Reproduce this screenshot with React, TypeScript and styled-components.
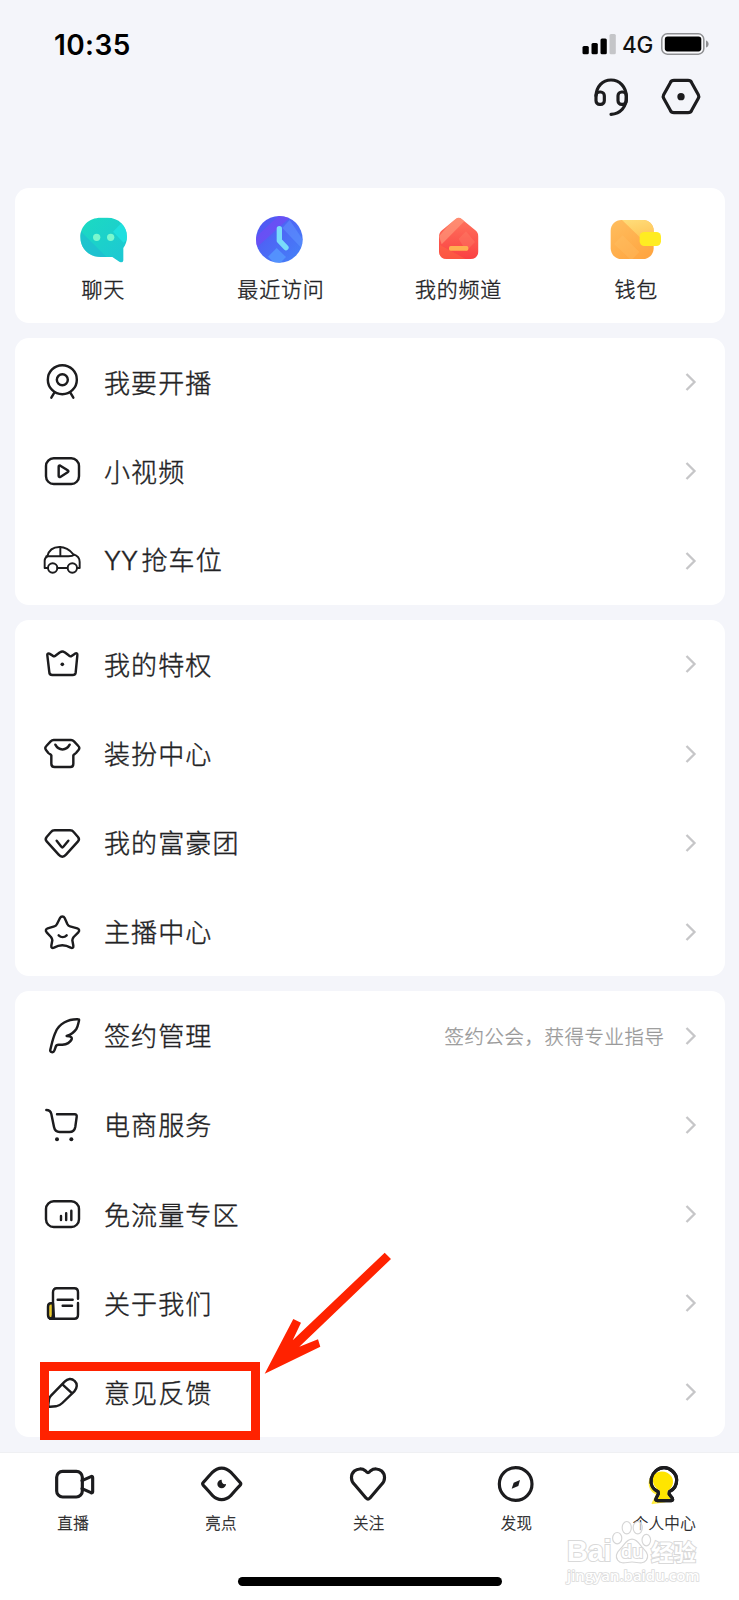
import React from "react";
import styled, { createGlobalStyle } from "styled-components";

const INK = "#1c1c1e";
const CJK = '"Noto Sans CJK SC", "Liberation Sans", sans-serif';

const GlobalStyle = createGlobalStyle`
  * { box-sizing: border-box; }
  body { margin: 0; background: #f4f5fa; font-family: ${CJK}; font-weight: 300; color: #222224; }
`;

const Screen = styled.div`
  position: relative;
  width: 739px;
  height: 1600px;
  overflow: hidden;
  display: flex;
  flex-direction: column;
  background: #f4f5fa;
`;

const StatusBar = styled.div`
  height: 66px;
  padding: 22px 30px 0 54px;
  display: flex;
  justify-content: space-between;
  align-items: center;
`;

const Clock = styled.span`
  font: 600 28px/1 Inter, sans-serif;
  letter-spacing: 0.4px;
  padding-top: 2px;
  color: #000;
`;

const StatusRight = styled.div`
  display: flex;
  align-items: center;
`;

const Network = styled.span`
  font: 500 22.5px/1 Inter, sans-serif;
  color: #111;
  width: 31px;
  margin: 2px 8px 0 6px;
  letter-spacing: -0.3px;
`;

const Toolbar = styled.div`
  height: 121.7px;
  padding: 11px 38px 0 0;
  display: flex;
  justify-content: flex-end;
  align-items: flex-start;
  gap: 29.8px;
`;

const Glyph = styled.svg<{ $size: number }>`
  display: block;
  flex: none;
  width: ${(p) => p.$size}px;
  height: ${(p) => p.$size}px;
  overflow: visible;
  fill: none;
  stroke: ${INK};
  stroke-linecap: round;
  stroke-linejoin: round;
`;

const Cards = styled.main`
  display: flex;
  flex-direction: column;
  gap: 14.6px;
  padding: 0 14px 0 14.5px;
  flex: none;
  height: 1264.7px;
`;

const Card = styled.section`
  flex: none;
  background: #fff;
  border-radius: 14px;
`;

const QuickCard = styled(Card)`
  height: 135.3px;
  display: grid;
  grid-template-columns: repeat(4, 1fr);
`;

const QuickItem = styled.div`
  display: flex;
  flex-direction: column;
  align-items: center;
  padding-top: 24.3px;
`;

const QuickLabel = styled.span`
  margin-top: 8.2px;
  font-size: 21px;
  line-height: 30px;
  letter-spacing: 0.8px;
  -webkit-text-stroke: 0.4px currentColor;
`;

const Row = styled.div`
  height: 89.2px;
  display: flex;
  align-items: center;
  padding: 0 27px 0 27.5px;
`;

const RowLabel = styled.span`
  margin: -1px 0 0 22px;
  flex: 1;
  font-size: 26px;
  line-height: 40px;
  letter-spacing: 1.1px;
  -webkit-text-stroke: 0.4px currentColor;
`;

const Latin = styled.span`
  font-family: Inter, sans-serif;
  font-size: 25.5px;
  letter-spacing: 0;
  display: inline-block;
  width: 37.5px;
`;

const Hint = styled.span`
  font-size: 19.4px;
  letter-spacing: 0.6px;
  color: #999;
  margin-right: 20.5px;
  -webkit-text-stroke: 0.3px currentColor;
`;

const ChevronSvg = styled.svg`
  width: 13px;
  height: 20px;
  fill: none;
  stroke: #c6c6c8;
  stroke-width: 2.3;
  flex: none;
`;

const TabBar = styled.nav`
  flex: 1;
  background: #fff;
  display: grid;
  grid-template-columns: repeat(5, 1fr);
  border-top: 1px solid #eff0f3;
`;

const Tab = styled.div`
  display: flex;
  flex-direction: column;
  align-items: center;
  padding-top: 9px;
`;

const TabLabel = styled.span`
  margin: 3.5px 1.5px 0 0;
  font-size: 15.5px;
  line-height: 24px;
  letter-spacing: 0.3px;
  -webkit-text-stroke: 0.3px currentColor;
`;

const HomeIndicator = styled.div`
  position: absolute;
  left: 237.5px;
  top: 1576.8px;
  width: 264px;
  height: 9px;
  border-radius: 5px;
  background: #000;
`;

const HighlightBox = styled.div`
  position: absolute;
  left: 40.3px;
  top: 1362.3px;
  width: 219.7px;
  height: 78px;
  border: 9px solid #ff2200;
`;

const Arrow = styled.svg`
  position: absolute;
  left: 260px;
  top: 1248px;
  width: 135px;
  height: 130px;
`;

const Watermark = styled.div`
  position: absolute;
  left: 567px;
  top: 1519px;
  width: 134px;
  height: 70px;
`;

const MarkLine = styled.div`
  position: relative;
  display: flex;
  align-items: center;
  height: 24px;
  margin-top: 20px;
  color: #fff;
  -webkit-text-stroke: 2px #d9d9d9;
  paint-order: stroke fill;
`;

const MarkLatin = styled.span`
  font: 700 29px/24px "Liberation Sans", sans-serif;
  width: 46px;
  letter-spacing: -0.3px;
`;

const MarkDu = styled.span`
  width: 38px;
  text-align: center;
  font: 600 18px/24px "Open Sans", sans-serif;
`;

const MarkCjk = styled.span`
  font: 700 22.5px/24px ${CJK};
`;

const MarkUrl = styled.div`
  margin-top: 3px;
  font: 600 15px/18px "Open Sans", sans-serif;
  color: #fff;
  white-space: nowrap;
  -webkit-text-stroke: 1.6px #dbdbdb;
  paint-order: stroke fill;
`;

const Paw = styled.svg`
  position: absolute;
  left: 44px;
  top: 0;
  width: 42px;
  height: 46px;
  fill: #ffffff99;
  stroke: #d6d6d6;
  stroke-width: 1.2;
`;

const rowIcons: Record<string, React.ReactNode> = {
  webcam: (
    <>
      <circle cx="61" cy="53" r="43.5" />
      <circle cx="61" cy="53" r="16.5" />
      <path d="M37 92 28 107M85 92l9 15" />
    </>
  ),
  video: (
    <>
      <rect x="12" y="22" width="99" height="77" rx="23" />
      <path d="M50 47v28c0 3 3 4 5 3l22-14c3-2 3-4 0-6L55 44c-2-1-5 0-5 3z" />
    </>
  ),
  car: (
    <g strokeWidth="5.8">
      <path d="M17 81H8V59c0-7 3-10 8-13C21 25 34 18 52 18c20 0 32 9 42 22 12 3 19 8 19 23v18h-7M46 81h30" />
      <path d="M13 46h66c8 0 14-1 18-5M55 18v28" />
      <circle cx="32" cy="81" r="14" />
      <circle cx="91" cy="81" r="14" />
    </g>
  ),
  crown: (
    <>
      <path d="M16 34c-1-5 2-7 6-5l10 6c4 3 7 3 10-1l12-9c5-4 9-4 14 0l12 9c3 4 6 4 10 1l9-6c5-3 8-1 7 5l-5 52c-1 5-4 7-9 7H31c-5 0-9-3-9-8z" />
      <circle cx="61" cy="61" r="5.5" fill={INK} stroke="none" />
    </>
  ),
  shirt: (
    <>
      <path d="M35 18h52c4 0 6 1 9 4l13 14c4 4 4 7 1 11l-8 10c-3 3-7 4-8 7v25c0 7-3 10-9 10H38c-6 0-10-3-10-10V64c-2-3-6-4-9-7L12 48c-3-4-3-8 1-12l13-14c3-3 5-4 9-4z" />
      <path d="M40 32c10 19 33 19 43 0" />
    </>
  ),
  diamond: (
    <>
      <path d="M38 22h46c5 0 8 1 11 5l13 15c4 5 4 9 0 13L72 95c-7 8-15 8-22 0L14 55c-4-4-4-8 0-13l13-15c3-4 6-5 11-5z" />
      <path d="m44 53 14 18c2 3 4 3 6 0l15-18" />
    </>
  ),
  star: (
    <>
      <path d="M54 18c3-6 11-6 14 0l8 18c2 4 4 6 8 7l22 6c6 2 7 7 3 12L95 75c-3 4-4 6-4 10l3 16c1 6-3 8-8 6-16-9-34-9-50 0-5 2-9 0-8-6l3-16c0-4-1-6-4-10L14 61c-4-5-3-10 3-12l20-6c4-1 6-3 8-7z" />
      <path d="M50 70c7 7 17 7 24 0" />
    </>
  ),
  feather: (
    <path d="M108 10C77 9 51 24 41 48c-9 19-12 38-16 53-2 8 9 11 12 3l4-11c1-5 3-7 9-7h11c12-1 23-6 28-16 2-5-2-8-7-9l-8-1c14-4 23-12 29-21 5-8 6-18 8-25 1-3 0-4-3-4z" />
  ),
  cart: (
    <>
      <path d="M13 15c9 0 13 3 15 12l8 39c2 10 7 15 17 15h29c11 0 16-5 18-16l4-29c1-6-1-8-6-8H45" />
      <circle cx="45" cy="103" r="6" fill={INK} stroke="none" />
      <circle cx="88" cy="103" r="6" fill={INK} stroke="none" />
    </>
  ),
  data: (
    <>
      <rect x="12" y="22" width="99" height="77" rx="23" />
      <path d="M57 66v12M72.500 58v20M88 50v28" />
    </>
  ),
  news: (
    <>
      <path d="M36 107H28c-7 0-10-4-10-11V71c0-7 4-10 9-10h6z" fill="#e8c92c" />
      <path d="M108 47V28c0-8-4-12-11-12H44c-7 0-11 4-11 12v67c0 6-2 12-9 12h73c7 0 11-4 11-12V60" />
      <path d="M47 50h45M62 68h28" />
    </>
  ),
  pen: (
    <>
      <path d="M27 71 68 29c9-10 21-11 30-2 9 8 8 21-1 31L61 93c-6 6-11 9-19 10l-17 1c-5 1-7-1-6-6l2-16c1-5 3-8 6-11z" />
      <path d="m62 38 26 24" />
    </>
  ),
};

const tabIcons: Record<string, React.ReactNode> = {
  live: (
    <>
      <rect x="14" y="28" width="77" height="77" rx="18" />
      <path d="m90 56 27-12c3-2 5 0 5 3v42c0 3-2 4-5 3L90 80" />
    </>
  ),
  highlight: (
    <>
      <path d="M10 61C22 49 29 39 37 31c17-17 39-17 56 0 8 8 15 18 27 30 3 3 3 6 0 9-12 12-19 22-27 30-17 17-39 17-56 0-8-8-15-18-27-30-3-3-3-6 0-9z" />
      <path d="M65 53c-7 0-13 6-13 13s6 13 13 13 13-6 13-13c-8 2-14-4-13-13z" fill={INK} stroke="none" />
    </>
  ),
  follow: (
    <path d="M55 26c3 4 5 6 8 6s5-2 8-6c9-7 24-7 33 1 12 11 11 29 0 40l-35 41c-4 4-8 4-12 0L22 67c-11-11-12-29 0-40 10-8 24-8 33-1z" />
  ),
  discover: (
    <>
      <circle cx="62" cy="66" r="49" />
      <path d="m75 54-5 18-20 8 6-18z" fill={INK} stroke="none" />
    </>
  ),
  mine: (
    <>
      <circle cx="54" cy="64" r="37" fill="#ffe500" stroke="none" opacity=".8" />
      <path d="m40 95-14 28c-1 3 1 4 4 3l38-5z" fill="#ffe500" stroke="none" opacity=".75" />
      <path d="M46 89C28 82 22 65 25 49c5-19 20-32 38-32s38 16 38 37c0 16-9 29-22 35l-1 7 10 13c2 4 1 7-3 7H43c-4 0-6-2-4-6l7-14z" fill="#fff" />
      <path d="M48 85C30 74 26 54 32 39c17-17 42-12 54 5 9 16 2 35-12 42v11l9 14H44l7-14z" fill="#ffe500" stroke="none" />
      <path d="M46 89C28 82 22 65 25 49c5-19 20-32 38-32s38 16 38 37c0 16-9 29-22 35l-1 7 10 13c2 4 1 7-3 7H43c-4 0-6-2-4-6l7-14z" />
    </>
  ),
};

const quickIcons: Record<string, React.ReactNode> = {
  chat: (
    <>
      <defs>
        <linearGradient id="chatFill" x1="0" y1="0" x2="1" y2="1">
          <stop offset="0" stopColor="#1bdcc0" />
          <stop offset="1" stopColor="#1dc5d6" />
        </linearGradient>
        <clipPath id="chatClip">
          <path d="M10 64C10 30 36 5 71 5h20c34 0 59 24 59 57 0 13-4 24-11 34v36c0 7-6 9-12 5l-21-14H71c-35 0-61-25-61-59z" />
        </clipPath>
      </defs>
      <g clipPath="url(#chatClip)" stroke="none">
        <path d="M0 0h160v150H0z" fill="url(#chatFill)" />
        <path d="M10 45 100 135H10z" fill="#20b4d4" opacity=".5" />
        <path d="m108 47 36-37 26 42-30 28z" fill="#22e8e8" opacity=".65" />
      </g>
      <circle cx="59" cy="64" r="11" fill="#79f8ce" stroke="none" />
      <circle cx="101" cy="64" r="11" fill="#79f8ce" stroke="none" />
    </>
  ),
  recent: (
    <g transform="translate(-3 0)">
      <defs>
        <linearGradient id="clockFill" x1="0" y1="0" x2="1" y2="1">
          <stop offset="0" stopColor="#544ff3" />
          <stop offset="1" stopColor="#4386f8" />
        </linearGradient>
        <clipPath id="clockClip"><circle cx="79" cy="70" r="70" /></clipPath>
      </defs>
      <g clipPath="url(#clockClip)" stroke="none">
        <path d="M0 0h150v150H0z" fill="url(#clockFill)" />
        <path d="M9 96V63L76 0h40z" fill="#704cf4" opacity=".75" />
        <path d="m88 36 22-24 50 75-12 12z" fill="#6297ff" opacity=".5" />
        <path d="m45 122 26-26 28 27-26 27z" fill="#579cff" opacity=".75" />
      </g>
      <path d="M79 38v36l20 21" stroke="#79dcfa" strokeWidth="16" />
    </g>
  ),
  channel: (
    <g transform="translate(4 0)">
      <defs>
        <linearGradient id="homeFill" x1="0" y1="0" x2="0" y2="1">
          <stop offset="0" stopColor="#ff765e" />
          <stop offset="1" stopColor="#fa3c40" />
        </linearGradient>
        <clipPath id="homeClip">
          <path d="m67 9c6-5 12-5 18 0l41 34c6 5 9 11 9 19v44c0 14-9 23-23 23H40c-14 0-23-9-23-23V62c0-8 3-14 9-19z" />
        </clipPath>
      </defs>
      <g clipPath="url(#homeClip)" stroke="none">
        <path d="M0 0h150v140H0z" fill="url(#homeFill)" />
        <path d="m17 61 52-60 28 11L25 85z" fill="#ff9a7d" opacity=".65" />
        <path d="m76 68 22-22 27 32-27 28z" fill="#ff8b72" opacity=".3" />
        <path d="m20 87 77 42H16z" fill="#ff7341" opacity=".4" />
      </g>
      <rect x="47" y="90" width="58" height="14" rx="5" fill="#ffaf51" stroke="none" />
    </g>
  ),
  wallet: (
    <>
      <defs>
        <linearGradient id="purseFill" x1="0" y1="0" x2=".6" y2="1">
          <stop offset="0" stopColor="#ffc061" />
          <stop offset="1" stopColor="#ffa642" />
        </linearGradient>
        <linearGradient id="purseFlap" x1=".2" y1="0" x2=".6" y2="1">
          <stop offset="0" stopColor="#ffdc78" />
          <stop offset="1" stopColor="#ffc457" />
        </linearGradient>
        <clipPath id="purseClip"><rect x="2" y="12" width="129" height="117" rx="32" /></clipPath>
      </defs>
      <g clipPath="url(#purseClip)" stroke="none">
        <path d="M0 0h135v135H0z" fill="url(#purseFill)" />
        <path d="m36 12 60 58 40-10V12z" fill="url(#purseFlap)" />
        <path d="m12 84 26-26 50 50-24 25z" fill="#ffc369" opacity=".3" />
      </g>
      <rect x="89" y="48" width="64" height="42" rx="14" fill="#ffec22" stroke="none" />
    </>
  ),
};

const quickLinks = [
  { icon: "chat", label: "聊天" },
  { icon: "recent", label: "最近访问" },
  { icon: "channel", label: "我的频道" },
  { icon: "wallet", label: "钱包" },
];

type MenuEntry = { icon: string; latin?: string; label: string; hint?: string };

const menuGroups: MenuEntry[][] = [
  [
    { icon: "webcam", label: "我要开播" },
    { icon: "video", label: "小视频" },
    { icon: "car", latin: "YY", label: "抢车位" },
  ],
  [
    { icon: "crown", label: "我的特权" },
    { icon: "shirt", label: "装扮中心" },
    { icon: "diamond", label: "我的富豪团" },
    { icon: "star", label: "主播中心" },
  ],
  [
    { icon: "feather", label: "签约管理", hint: "签约公会，获得专业指导" },
    { icon: "cart", label: "电商服务" },
    { icon: "data", label: "免流量专区" },
    { icon: "news", label: "关于我们" },
    { icon: "pen", label: "意见反馈" },
  ],
];

const tabs = [
  { icon: "live", label: "直播" },
  { icon: "highlight", label: "亮点" },
  { icon: "follow", label: "关注" },
  { icon: "discover", label: "发现" },
  { icon: "mine", label: "个人中心" },
];

const StatusIcons = () => (
  <>
    <svg width="34" height="22" viewBox="0 0 34 22">
      <rect x="0.500" y="13" width="6.300" height="8.300" rx="1.500" />
      <rect x="9.500" y="10" width="6.300" height="11.300" rx="1.500" />
      <rect x="18.500" y="5.500" width="6.300" height="15.800" rx="1.500" />
      <rect x="27.500" y="1" width="6.300" height="20.300" rx="1.500" fill="#c4c5c8" />
    </svg>
    <Network>4G</Network>
    <svg width="48" height="22" viewBox="0 0 48 22">
      <rect x="0.800" y="0.800" width="42" height="20.400" rx="5.500" fill="#fafafc" stroke="#8f9093" strokeWidth="1.500" />
      <rect x="3.800" y="3.600" width="36.500" height="14.800" rx="2.800" />
      <path d="M45 7.500c3.500 1 3.500 6 0 7z" fill="#8f9093" />
    </svg>
  </>
);

export default function App() {
  return (
    <>
      <GlobalStyle />
      <Screen>
        <StatusBar>
          <Clock>10:35</Clock>
          <StatusRight>
            <StatusIcons />
          </StatusRight>
        </StatusBar>
        <Toolbar>
          <Glyph $size={40} viewBox="0 0 120 120" strokeWidth="9.5">
            <path d="M15 56C17 28 34 9 60 9s45 20 46 49c1 33-18 52-46 54" />
            <rect x="15" y="45" width="25" height="37" rx="11" />
            <rect x="81" y="45" width="25" height="37" rx="11" />
          </Glyph>
          <Glyph $size={40} viewBox="0 0 120 120" strokeWidth="9.5">
            <path d="M39 10h42c5 0 9 2 11 7l20 36c2 4 2 7 0 11l-20 36c-2 5-6 7-11 7H39c-5 0-9-2-11-7L8 64c-2-4-2-7 0-11l20-36c2-5 6-7 11-7z" />
            <circle cx="60" cy="59" r="11" fill={INK} stroke="none" />
          </Glyph>
        </Toolbar>
        <Cards>
          <QuickCard>
            {quickLinks.map((q) => (
              <QuickItem key={q.label}>
                <Glyph $size={53} viewBox="0 -12 159 159">
                  {quickIcons[q.icon]}
                </Glyph>
                <QuickLabel>{q.label}</QuickLabel>
              </QuickItem>
            ))}
          </QuickCard>
          {menuGroups.map((group) => (
            <Card key={group[0].label}>
              {group.map((item) => (
                <Row key={item.label}>
                  <Glyph $size={40} viewBox="0 0 120 120" strokeWidth="7.3">
                    {rowIcons[item.icon]}
                  </Glyph>
                  <RowLabel>
                    {item.latin && <Latin>{item.latin}</Latin>}
                    {item.label}
                  </RowLabel>
                  {item.hint && <Hint>{item.hint}</Hint>}
                  <ChevronSvg viewBox="0 0 13 20">
                    <path d="m1.500 2 8 8-8 8" />
                  </ChevronSvg>
                </Row>
              ))}
            </Card>
          ))}
        </Cards>
        <TabBar>
          {tabs.map((t) => (
            <Tab key={t.label}>
              <Glyph $size={44} viewBox="0 0 132 132" strokeWidth="9.5">
                {tabIcons[t.icon]}
              </Glyph>
              <TabLabel>{t.label}</TabLabel>
            </Tab>
          ))}
        </TabBar>
        <HomeIndicator />
        <Watermark>
          <Paw viewBox="0 0 44 48">
            <ellipse cx="6.500" cy="20" rx="4.800" ry="6" />
            <ellipse cx="16.500" cy="9" rx="4.800" ry="6.500" />
            <ellipse cx="28" cy="9" rx="4.800" ry="6.500" />
            <ellipse cx="37" cy="22" rx="4.500" ry="6" />
            <path d="M22 21c6 0 8 6 12 10s6 8 3 12c-4 5-9 2-15 2s-11 3-15-2c-3-4-1-8 3-12s6-10 12-10z" />
          </Paw>
          <MarkLine>
            <MarkLatin>Bai</MarkLatin>
            <MarkDu>du</MarkDu>
            <MarkCjk>经验</MarkCjk>
          </MarkLine>
          <MarkUrl>jingyan.baidu.com</MarkUrl>
        </Watermark>
        <HighlightBox />
        <Arrow viewBox="260 1248 135 130">
          <path
            d="M264.700 1373.700 293.300 1319 301 1322.700 292.700 1340.300 384.700 1252.700 391 1259 299.300 1346.700 318 1339.300 320.300 1346.700z"
            fill="#ff2200"
          />
        </Arrow>
      </Screen>
    </>
  );
}
